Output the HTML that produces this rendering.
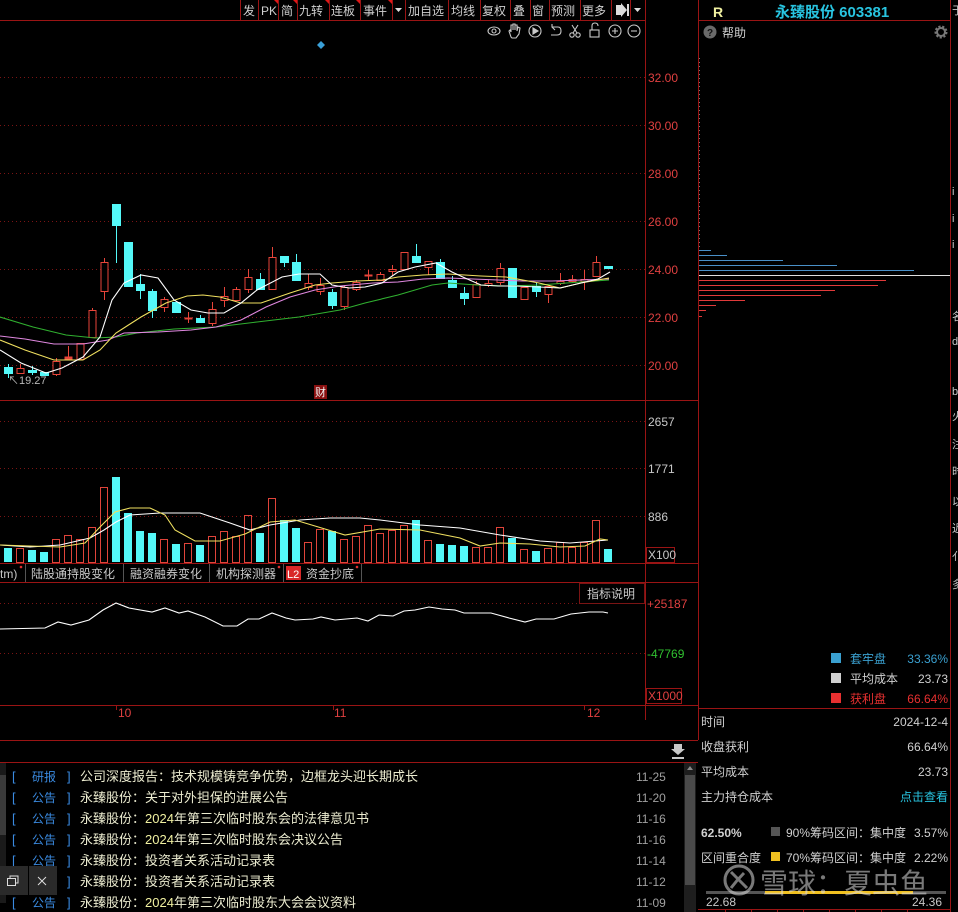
<!DOCTYPE html>
<html><head><meta charset="utf-8">
<style>
html,body{margin:0;padding:0;background:#000;width:958px;height:912px;overflow:hidden}
svg{display:block}
text{font-family:"Liberation Sans","Noto Sans CJK SC",sans-serif}
.cn{font-family:"Liberation Sans","Noto Sans CJK SC",sans-serif}
</style></head><body>
<svg width="958" height="912" viewBox="0 0 958 912" xmlns="http://www.w3.org/2000/svg">
<rect width="958" height="912" fill="#000"/>
<!-- toolbar -->
<g font-size="12" fill="#d0d0d0" class="cn">
<line x1="0" y1="20.5" x2="645" y2="20.5" stroke="#9a1414"/>
<g stroke="#9a1414">
<line x1="240.5" y1="0" x2="240.5" y2="20"/><line x1="258.5" y1="0" x2="258.5" y2="20"/><line x1="278.5" y1="0" x2="278.5" y2="20"/><line x1="297.5" y1="0" x2="297.5" y2="20"/><line x1="329.5" y1="0" x2="329.5" y2="20"/><line x1="360.5" y1="0" x2="360.5" y2="20"/><line x1="392.5" y1="0" x2="392.5" y2="20"/><line x1="405.5" y1="0" x2="405.5" y2="20"/><line x1="448.5" y1="0" x2="448.5" y2="20"/><line x1="480.5" y1="0" x2="480.5" y2="20"/><line x1="510.5" y1="0" x2="510.5" y2="20"/><line x1="530.5" y1="0" x2="530.5" y2="20"/><line x1="549.5" y1="0" x2="549.5" y2="20"/><line x1="580.5" y1="0" x2="580.5" y2="20"/><line x1="611.5" y1="0" x2="611.5" y2="20"/><line x1="630.5" y1="0" x2="630.5" y2="20"/><line x1="645.5" y1="0" x2="645.5" y2="20"/>
</g>
<g fill="#e01818"><polygon points="274,0 278,0 278,4"/><polygon points="293,0 297,0 297,4"/><polygon points="325,0 329,0 329,4"/><polygon points="356,0 360,0 360,4"/><polygon points="388,0 392,0 392,4"/></g>
<text x="243" y="15">发</text><text x="261" y="15">PK</text><text x="281" y="15">简</text><text x="299" y="15">九转</text><text x="331" y="15">连板</text><text x="363" y="15">事件</text>
<polygon points="395,8 402,8 398.5,12" fill="#ddd"/>
<text x="408" y="15">加自选</text><text x="451" y="15">均线</text><text x="482" y="15">复权</text><text x="513" y="15">叠</text><text x="532" y="15">窗</text><text x="551" y="15">预测</text><text x="582" y="15">更多</text>
<polygon points="616,5 621,5 621,3 627,10 621,17 621,15 616,15" fill="#ddd"/><rect x="627" y="4" width="2" height="12" fill="#ddd"/>
<polygon points="634,8 641,8 637.5,12" fill="#ddd"/>
</g>
<!-- tool icons -->
<g stroke="#c8c8c8" fill="none" stroke-width="1.1">
<ellipse cx="494" cy="31" rx="6" ry="4"/><circle cx="494" cy="31" r="2"/>
<path d="M511 37 L509 31 L510 30 L511 32 L511 25 L513 25 L513 30 L513 24 L515 24 L515 30 L515 25 L517 25 L517 31 L518 27 L520 28 L519 34 L516 38 L512 38 Z"/>
<circle cx="535" cy="31" r="6"/><path d="M533 28 L538 31 L533 34 Z" fill="#c8c8c8"/>
<path d="M557 27 L552 27 L552 24 M552 27 L555 30 M552 27 L558 27 Q561 27 561 31 Q561 35 557 35 L551 35"/>
<circle cx="572" cy="35" r="2.2"/><circle cx="578" cy="35" r="2.2"/><path d="M573 33 L578 25 M577 33 L572 25"/>
<rect x="590" y="30" width="9" height="7"/><path d="M592 30 L592 26 Q592 23 595 23 Q598 23 598 26"/>
<circle cx="615" cy="31" r="6"/><path d="M612 31 L618 31 M615 28 L615 34"/>
<circle cx="634" cy="31" r="6"/><path d="M631 31 L637 31"/>
</g>
<polygon points="321,41 325,45 321,49 317,45" fill="#3aa0d8"/>
<!-- axes frame -->
<g stroke="#9a1414">
<line x1="645.5" y1="20" x2="645.5" y2="720"/>
<line x1="698.5" y1="0" x2="698.5" y2="740"/>
<line x1="0" y1="400.5" x2="698" y2="400.5"/>
<line x1="0" y1="563.5" x2="698" y2="563.5"/>
<line x1="0" y1="582.5" x2="698" y2="582.5"/>
<line x1="0" y1="705.5" x2="698" y2="705.5"/>
<line x1="0" y1="740.5" x2="698" y2="740.5"/>
<line x1="0" y1="762.5" x2="698" y2="762.5"/>
</g>
<!-- price grid -->
<g stroke="#7a1414" stroke-dasharray="1,3">
<line x1="0" y1="77.5" x2="645" y2="77.5"/><line x1="0" y1="125.5" x2="645" y2="125.5"/><line x1="0" y1="173.5" x2="645" y2="173.5"/><line x1="0" y1="221.5" x2="645" y2="221.5"/><line x1="0" y1="269.5" x2="645" y2="269.5"/><line x1="0" y1="317.5" x2="645" y2="317.5"/><line x1="0" y1="365.5" x2="645" y2="365.5"/>
<line x1="0" y1="421.5" x2="645" y2="421.5"/><line x1="0" y1="468.5" x2="645" y2="468.5"/><line x1="0" y1="516.5" x2="645" y2="516.5"/>
<line x1="0" y1="603.5" x2="645" y2="603.5"/><line x1="0" y1="653.5" x2="645" y2="653.5"/>
</g>
<g font-size="12" fill="#e04040">
<text x="648" y="82">32.00</text><text x="648" y="130">30.00</text><text x="648" y="178">28.00</text><text x="648" y="226">26.00</text><text x="648" y="274">24.00</text><text x="648" y="322">22.00</text><text x="648" y="370">20.00</text>
</g>
<g font-size="12" fill="#c8c8c8">
<text x="648" y="426">2657</text><text x="648" y="473">1771</text><text x="648" y="521">886</text>
<rect x="646.5" y="547.5" width="28" height="15" fill="none" stroke="#9a1414"/><text x="648" y="559">X100</text>
</g>
<text x="647" y="608" font-size="12" fill="#e04040">+25187</text>
<text x="647" y="658" font-size="12" fill="#30c030">-47769</text>
<rect x="646.5" y="688.5" width="35" height="15" fill="none" stroke="#9a1414"/><text x="648" y="700" font-size="12" fill="#e04040">X1000</text>
<!-- candles -->
<g stroke-width="1">
<g stroke="#e8453a">
<line x1="20.5" y1="364" x2="20.5" y2="373"/><line x1="56.5" y1="358" x2="56.5" y2="376"/><line x1="68.5" y1="346" x2="68.5" y2="360"/><line x1="80.5" y1="343" x2="80.5" y2="359"/><line x1="92.5" y1="308" x2="92.5" y2="337"/><line x1="104.5" y1="258" x2="104.5" y2="300"/><line x1="164.5" y1="297" x2="164.5" y2="312"/><line x1="188.5" y1="312" x2="188.5" y2="323"/><line x1="212.5" y1="302" x2="212.5" y2="326"/><line x1="224.5" y1="287" x2="224.5" y2="307"/><line x1="236.5" y1="287" x2="236.5" y2="300"/><line x1="248.5" y1="269" x2="248.5" y2="293"/><line x1="272.5" y1="247" x2="272.5" y2="289"/><line x1="308.5" y1="274" x2="308.5" y2="290"/><line x1="320.5" y1="278" x2="320.5" y2="295"/><line x1="344.5" y1="285" x2="344.5" y2="310"/><line x1="356.5" y1="280" x2="356.5" y2="291"/><line x1="368.5" y1="270" x2="368.5" y2="280"/><line x1="380.5" y1="272" x2="380.5" y2="281"/><line x1="392.5" y1="265" x2="392.5" y2="276"/><line x1="404.5" y1="252" x2="404.5" y2="269"/><line x1="428.5" y1="261" x2="428.5" y2="275"/><line x1="476.5" y1="281" x2="476.5" y2="297"/><line x1="488.5" y1="280" x2="488.5" y2="287"/><line x1="500.5" y1="263" x2="500.5" y2="285"/><line x1="524.5" y1="287" x2="524.5" y2="299"/><line x1="548.5" y1="286" x2="548.5" y2="303"/><line x1="560.5" y1="273" x2="560.5" y2="285"/><line x1="572.5" y1="275" x2="572.5" y2="283"/><line x1="584.5" y1="270" x2="584.5" y2="290"/><line x1="596.5" y1="256" x2="596.5" y2="276"/>
</g>
<g stroke="#54f8f8">
<line x1="8.5" y1="364" x2="8.5" y2="378"/><line x1="32.5" y1="366" x2="32.5" y2="375"/><line x1="116.5" y1="204" x2="116.5" y2="263"/><line x1="140.5" y1="274" x2="140.5" y2="299"/><line x1="152.5" y1="289" x2="152.5" y2="318"/><line x1="200.5" y1="315" x2="200.5" y2="323"/><line x1="260.5" y1="273" x2="260.5" y2="290"/><line x1="284.5" y1="256" x2="284.5" y2="267"/><line x1="296.5" y1="254" x2="296.5" y2="281"/><line x1="332.5" y1="289" x2="332.5" y2="309"/><line x1="416.5" y1="244" x2="416.5" y2="263"/><line x1="440.5" y1="259" x2="440.5" y2="279"/><line x1="452.5" y1="276" x2="452.5" y2="288"/><line x1="464.5" y1="287" x2="464.5" y2="305"/><line x1="536.5" y1="283" x2="536.5" y2="297"/>
</g>
<g fill="#000" stroke="#e8453a">
<rect x="17" y="368.5" width="7" height="5"/><rect x="53" y="361.5" width="7" height="13"/><rect x="65" y="357" width="7" height="2" fill="#e8453a"/><rect x="77" y="343.5" width="7" height="16"/><rect x="89" y="310.5" width="7" height="27"/><rect x="101" y="262.5" width="7" height="29"/><rect x="161" y="299.5" width="7" height="8"/><rect x="185" y="318" width="7" height="1" fill="#e8453a"/><rect x="209" y="309.5" width="7" height="14"/><rect x="221" y="296.5" width="7" height="4"/><rect x="233" y="289.5" width="7" height="11"/><rect x="245" y="277.5" width="7" height="12"/><rect x="269" y="257.5" width="7" height="32"/><rect x="305" y="283.5" width="7" height="4"/><rect x="317" y="285.5" width="7" height="6"/><rect x="341" y="287.5" width="7" height="19"/><rect x="353" y="282.5" width="7" height="7"/><rect x="365" y="275" width="7" height="1" fill="#e8453a"/><rect x="377" y="274.5" width="7" height="6"/><rect x="389" y="269.5" width="7" height="2"/><rect x="401" y="252.5" width="7" height="17"/><rect x="425" y="261.5" width="7" height="6"/><rect x="473" y="284.5" width="7" height="13"/><rect x="485" y="283.5" width="7" height="2"/><rect x="497" y="268.5" width="7" height="14"/><rect x="521" y="287.5" width="7" height="12"/><rect x="545" y="286.5" width="7" height="8"/><rect x="557" y="281.5" width="7" height="2"/><rect x="569" y="279.5" width="7" height="2"/><rect x="581" y="279.5" width="7" height="2"/><rect x="593" y="262.5" width="7" height="14"/>
</g>
<g fill="#54f8f8">
<rect x="4" y="367" width="9" height="7"/><rect x="28" y="370" width="9" height="3"/><rect x="40" y="372" width="9" height="4"/><rect x="112" y="204" width="9" height="22"/><rect x="124" y="242" width="9" height="45"/><rect x="136" y="284" width="9" height="7"/><rect x="148" y="291" width="9" height="20"/><rect x="172" y="302" width="9" height="11"/><rect x="196" y="318" width="9" height="5"/><rect x="256" y="279" width="9" height="11"/><rect x="280" y="256" width="9" height="7"/><rect x="292" y="262" width="9" height="19"/><rect x="328" y="292" width="9" height="14"/><rect x="412" y="256" width="9" height="7"/><rect x="436" y="262" width="9" height="17"/><rect x="448" y="280" width="9" height="8"/><rect x="460" y="293" width="9" height="6"/><rect x="508" y="268" width="9" height="30"/><rect x="532" y="286" width="9" height="6"/><rect x="604" y="266" width="9" height="3"/>
</g>
</g>
<!-- MAs -->
<g fill="none" stroke-width="1.1">
<polyline stroke="#30b030" points="0,317 33,327 66,335 95,338 116,337 137,333 174,329 216,327 257,322 299,317 340,310 365,303 398,295 432,285 448,283 477,285 506,286 539,285 581,282 609,280"/>
<polyline stroke="#e088e0" points="0,336 25,339 54,344 83,344 108,340 124,333 158,332 191,330 216,327 241,320 266,307 290,297 315,290 340,286 373,283 398,282 423,279 448,278 473,279 498,280 523,281 552,281 581,280 609,279"/>
<polyline stroke="#f0e060" points="0,340 25,350 54,360 83,360 100,350 116,333 141,317 166,303 187,296 203,295 220,297 241,303 261,303 290,293 315,285 332,283 357,281 382,280 398,277 423,275 448,274 481,276 506,277 539,283 560,288 581,283 609,278"/>
<polyline stroke="#ffffff" points="0,350 21,363 46,373 62,368 83,357 100,337 112,300 124,283 141,275 158,278 174,300 191,310 208,313 224,313 241,303 257,290 282,277 299,274 320,274 332,285 349,288 365,287 382,283 398,272 415,267 436,263 452,272 465,278 481,285 498,286 515,286 539,287 560,288 581,283 598,279 610,272"/>
</g>
<text x="8" y="384" font-size="11" fill="#b8b8b8">↖19.27</text>
<rect x="314" y="385" width="13" height="14" fill="#8a1010"/><text x="315" y="396" font-size="11" fill="#f0f0f0">财</text>
<!-- volume -->
<g>
<g fill="#54f8f8">
<rect x="4" y="548" width="8" height="14"/><rect x="28" y="550" width="8" height="12"/><rect x="40" y="552" width="8" height="10"/><rect x="112" y="477" width="8" height="85"/><rect x="124" y="513" width="8" height="49"/><rect x="136" y="531" width="8" height="31"/><rect x="148" y="533" width="8" height="29"/><rect x="172" y="544" width="8" height="18"/><rect x="196" y="545" width="8" height="17"/><rect x="256" y="533" width="8" height="29"/><rect x="280" y="520" width="8" height="42"/><rect x="292" y="528" width="8" height="34"/><rect x="328" y="531" width="8" height="31"/><rect x="412" y="520" width="8" height="42"/><rect x="436" y="544" width="8" height="18"/><rect x="448" y="545" width="8" height="17"/><rect x="460" y="546" width="8" height="16"/><rect x="508" y="538" width="8" height="24"/><rect x="532" y="551" width="8" height="11"/><rect x="604" y="549" width="8" height="13"/>
</g>
<g fill="none" stroke="#e0443a">
<rect x="16.5" y="548.5" width="7" height="14"/><rect x="52.5" y="539.5" width="7" height="23"/><rect x="64.5" y="535.5" width="7" height="27"/><rect x="76.5" y="539.5" width="7" height="23"/><rect x="88.5" y="527.5" width="7" height="35"/><rect x="100.5" y="487.5" width="7" height="75"/><rect x="160.5" y="539.5" width="7" height="23"/><rect x="184.5" y="543.5" width="7" height="19"/><rect x="208.5" y="536.5" width="7" height="26"/><rect x="220.5" y="531.5" width="7" height="31"/><rect x="232.5" y="536.5" width="7" height="26"/><rect x="244.5" y="515.5" width="7" height="47"/><rect x="268.5" y="498.5" width="7" height="64"/><rect x="304.5" y="542.5" width="7" height="20"/><rect x="316.5" y="529.5" width="7" height="33"/><rect x="340.5" y="539.5" width="7" height="23"/><rect x="352.5" y="536.5" width="7" height="26"/><rect x="364.5" y="525.5" width="7" height="37"/><rect x="376.5" y="533.5" width="7" height="29"/><rect x="388.5" y="530.5" width="7" height="32"/><rect x="400.5" y="525.5" width="7" height="37"/><rect x="424.5" y="540.5" width="7" height="22"/><rect x="472.5" y="547.5" width="7" height="15"/><rect x="484.5" y="547.5" width="7" height="15"/><rect x="496.5" y="527.5" width="7" height="35"/><rect x="520.5" y="549.5" width="7" height="13"/><rect x="544.5" y="548.5" width="7" height="14"/><rect x="556.5" y="542.5" width="7" height="20"/><rect x="568.5" y="547.5" width="7" height="15"/><rect x="580.5" y="542.5" width="7" height="20"/><rect x="592.5" y="520.5" width="7" height="42"/>
</g>
<g fill="none" stroke-width="1.1">
<polyline stroke="#ffffff" points="0,545 30,547 60,545 90,538 104,530 116,522 130,515 160,513 200,513 230,523 250,530 270,525 300,520 330,518 360,518 380,520 420,525 460,528 500,535 540,541 570,543 608,540"/>
<polyline stroke="#f0e060" points="0,545 30,546 60,547 85,543 100,527 115,512 130,508 150,508 165,515 175,530 195,541 220,541 245,534 270,522 295,520 315,526 345,535 380,529 420,530 460,538 480,546 500,543 530,544 560,547 585,546 600,539 608,540"/>
</g>
</g>
<!-- tab row -->
<g font-size="12" fill="#c8c8c8">
<text x="0" y="578">tm)</text><circle cx="21" cy="567" r="1.3" fill="#e03030"/>
<line x1="25.5" y1="564" x2="25.5" y2="582" stroke="#555"/>
<text x="31" y="578">陆股通持股变化</text><line x1="123.5" y1="564" x2="123.5" y2="582" stroke="#555"/>
<text x="130" y="578">融资融券变化</text><line x1="209.5" y1="564" x2="209.5" y2="582" stroke="#555"/>
<text x="216" y="578">机构探测器</text><circle cx="279" cy="567" r="1.3" fill="#e03030"/><line x1="283.5" y1="564" x2="283.5" y2="582" stroke="#555"/>
<rect x="286" y="566" width="15" height="14" fill="#d82828"/><text x="287" y="578" fill="#fff" font-size="11">L2</text>
<text x="306" y="578">资金抄底</text><circle cx="357" cy="567" r="1.3" fill="#e03030"/><line x1="361.5" y1="564" x2="361.5" y2="582" stroke="#555"/>
<rect x="579.5" y="583.5" width="65" height="20" fill="#000" stroke="#7a1414"/><text x="587" y="598">指标说明</text>
</g>
<polyline fill="none" stroke="#ffffff" stroke-width="1.1" points="0,629 45,628 58,622 71,625 89,620 103,610 116,603 129,608 152,612 165,608 179,613 188,611 205,617 223,626 237,626 248,619 259,619 272,613 286,618 295,620 313,619 321,617 335,620 357,618 368,621 379,615 393,616 404,611 415,610 429,607 442,609 455,610 464,613 491,613 509,618 525,622 536,619 554,619 571,614 589,612 603,612 608,613"/>
<!-- date axis -->
<g stroke="#9a1414"><line x1="116.5" y1="705" x2="116.5" y2="710"/><line x1="333.5" y1="705" x2="333.5" y2="710"/><line x1="584.5" y1="705" x2="584.5" y2="710"/></g>
<g font-size="12" fill="#e04040"><text x="118" y="717">10</text><text x="334" y="717">11</text><text x="587" y="717">12</text></g>
<!-- news -->
<rect x="0" y="741" width="698" height="21" fill="#000"/>
<g fill="#c8c8c8"><rect x="674" y="744" width="8" height="5"/><polygon points="671,749 685,749 678,755"/><rect x="672" y="757" width="12" height="2"/></g>
<rect x="684" y="763" width="12" height="149" fill="#1e1e1e"/><rect x="685" y="775" width="10" height="110" fill="#4a4a4a"/>
<polygon points="690,766 693,770 687,770" fill="#888"/>
<rect x="0" y="763" width="6" height="140" fill="#1a1a1a"/><rect x="0" y="775" width="6" height="60" fill="#3a3a3a"/>
<g font-size="13">
<g fill="#3a8ae0"><text x="12" y="781">[</text><text x="32" y="781" font-size="12">研报</text><text x="67" y="781">]</text>
<text x="12" y="802">[</text><text x="32" y="802" font-size="12">公告</text><text x="67" y="802">]</text>
<text x="12" y="823">[</text><text x="32" y="823" font-size="12">公告</text><text x="67" y="823">]</text>
<text x="12" y="844">[</text><text x="32" y="844" font-size="12">公告</text><text x="67" y="844">]</text>
<text x="12" y="865">[</text><text x="32" y="865" font-size="12">公告</text><text x="67" y="865">]</text>
<text x="67" y="886">]</text>
<text x="12" y="907">[</text><text x="32" y="907" font-size="12">公告</text><text x="67" y="907">]</text></g>
<g fill="#ececd0">
<text x="80" y="781">公司深度报告：技术规模铸竞争优势，边框龙头迎长期成长</text>
<text x="80" y="802">永臻股份：关于对外担保的进展公告</text>
<text x="80" y="823">永臻股份：<tspan fill="#f0f0a0">2024</tspan>年第三次临时股东会的法律意见书</text>
<text x="80" y="844">永臻股份：<tspan fill="#f0f0a0">2024</tspan>年第三次临时股东会决议公告</text>
<text x="80" y="865">永臻股份：投资者关系活动记录表</text>
<text x="80" y="886">永臻股份：投资者关系活动记录表</text>
<text x="80" y="907">永臻股份：<tspan fill="#f0f0a0">2024</tspan>年第三次临时股东大会会议资料</text>
</g>
<g fill="#a0a0a0" font-size="12"><text x="636" y="781">11-25</text><text x="636" y="802">11-20</text><text x="636" y="823">11-16</text><text x="636" y="844">11-16</text><text x="636" y="865">11-14</text><text x="636" y="886">11-12</text><text x="636" y="907">11-09</text></g>
</g>
<rect x="0" y="866" width="57" height="29" fill="#2a2a2a"/><line x1="28.5" y1="866" x2="28.5" y2="895" stroke="#000"/>
<g stroke="#ddd" fill="none"><rect x="7.5" y="878.5" width="8" height="7"/><path d="M10 878 L10 876 L18 876 L18 883 L16 883"/><path d="M38 877 L46 885 M46 877 L38 885"/></g>
<!-- right panel -->
<g stroke="#9a1414"><line x1="698" y1="20.5" x2="950" y2="20.5"/><line x1="950.5" y1="0" x2="950.5" y2="912"/><line x1="698" y1="708.5" x2="950" y2="708.5"/></g>
<text x="713" y="17" font-size="14" font-weight="bold" fill="#f0f0a0">R</text>
<text x="775" y="17" font-size="15" font-weight="bold" fill="#28c4e0" font-family="Liberation Serif,'Noto Serif CJK SC',serif">永臻股份 603381</text>
<circle cx="710" cy="32" r="6.5" fill="#6a6a6a"/><text x="707" y="36" font-size="10" font-weight="bold" fill="#111">?</text>
<text x="722" y="37" font-size="12" fill="#d0d0d0">帮助</text>
<circle cx="941" cy="32" r="5" fill="none" stroke="#777" stroke-width="3" stroke-dasharray="2,1.5"/><circle cx="941" cy="32" r="4" fill="none" stroke="#777" stroke-width="2"/>
<line x1="699.5" y1="58" x2="699.5" y2="248" stroke="#777" stroke-dasharray="1,3"/>
<g stroke="#4a90c8"><line x1="699" y1="250.5" x2="711" y2="250.5"/><line x1="699" y1="255.5" x2="727" y2="255.5"/><line x1="699" y1="260.5" x2="783" y2="260.5"/><line x1="699" y1="265.5" x2="837" y2="265.5"/><line x1="699" y1="270.5" x2="914" y2="270.5"/></g>
<line x1="699" y1="275.5" x2="950" y2="275.5" stroke="#e0e0e0"/>
<g stroke="#e03a3a"><line x1="699" y1="280.5" x2="886" y2="280.5"/><line x1="699" y1="285.5" x2="878" y2="285.5"/><line x1="699" y1="290.5" x2="835" y2="290.5"/><line x1="699" y1="295.5" x2="821" y2="295.5"/><line x1="699" y1="300.5" x2="745" y2="300.5"/><line x1="699" y1="305.5" x2="716" y2="305.5"/><line x1="699" y1="310.5" x2="706" y2="310.5"/><line x1="699" y1="316.5" x2="702" y2="316.5"/></g>
<g font-size="12">
<rect x="831" y="653" width="10" height="10" fill="#3aa0d0"/><text x="850" y="663" fill="#3aa0d0">套牢盘</text><text x="948" y="663" fill="#3aa0d0" text-anchor="end">33.36%</text>
<rect x="831" y="673" width="10" height="10" fill="#d0d0d0"/><text x="850" y="683" fill="#d0d0d0">平均成本</text><text x="948" y="683" fill="#d0d0d0" text-anchor="end">23.73</text>
<rect x="831" y="693" width="10" height="10" fill="#e83030"/><text x="850" y="703" fill="#e83030">获利盘</text><text x="948" y="703" fill="#e83030" text-anchor="end">66.64%</text>
<g fill="#d0d0d0">
<text x="701" y="726">时间</text><text x="948" y="726" text-anchor="end">2024-12-4</text>
<text x="701" y="751">收盘获利</text><text x="948" y="751" text-anchor="end">66.64%</text>
<text x="701" y="776">平均成本</text><text x="948" y="776" text-anchor="end">23.73</text>
<text x="701" y="801">主力持仓成本</text><text x="948" y="801" text-anchor="end" fill="#28c4e0">点击查看</text>
<text x="701" y="837" font-weight="bold">62.50%</text>
<rect x="771" y="827" width="9" height="9" fill="#555"/><text x="786" y="837">90%筹码区间：集中度</text><text x="948" y="837" text-anchor="end">3.57%</text>
<text x="701" y="862">区间重合度</text>
<rect x="771" y="852" width="9" height="9" fill="#f0c020"/><text x="786" y="862">70%筹码区间：集中度</text><text x="948" y="862" text-anchor="end">2.22%</text>
</g>
</g>
<rect x="706" y="891" width="240" height="3" fill="#555"/><rect x="765" y="891" width="148" height="3" fill="#f0c020"/>
<g font-size="12" fill="#c8c8c8"><text x="706" y="906">22.68</text><text x="912" y="906">24.36</text></g>
<g stroke="#9a1414"><line x1="698" y1="909.5" x2="950" y2="909.5"/><line x1="725.5" y1="909" x2="725.5" y2="912"/><line x1="751.5" y1="909" x2="751.5" y2="912"/><line x1="777.5" y1="909" x2="777.5" y2="912"/><line x1="803.5" y1="909" x2="803.5" y2="912"/><line x1="829.5" y1="909" x2="829.5" y2="912"/><line x1="855.5" y1="909" x2="855.5" y2="912"/><line x1="881.5" y1="909" x2="881.5" y2="912"/><line x1="907.5" y1="909" x2="907.5" y2="912"/></g>
<!-- watermark -->
<g opacity="0.55">
<circle cx="739" cy="880" r="14" fill="none" stroke="#ddd" stroke-width="3"/>
<path d="M731 872 Q739 880 747 888 M731 888 Q737 880 744 873" stroke="#ddd" stroke-width="3" fill="none"/>
<text x="760" y="893" font-size="28" fill="#ddd">雪球：夏虫鱼</text>
</g>
<!-- far right strip -->
<g fill="#c8c8c8" font-size="11"><text x="952" y="14">于</text><text x="952" y="195">i</text><text x="952" y="222">i</text><text x="952" y="248">i</text><text x="952" y="320">名</text><text x="952" y="345">d</text><text x="952" y="395">b</text><text x="952" y="420">火</text><text x="952" y="448">注</text><text x="952" y="475">时</text><text x="952" y="505">以</text><text x="952" y="532">近</text><text x="952" y="560">亻</text><text x="952" y="588">多</text></g>
</svg>
</body></html>
